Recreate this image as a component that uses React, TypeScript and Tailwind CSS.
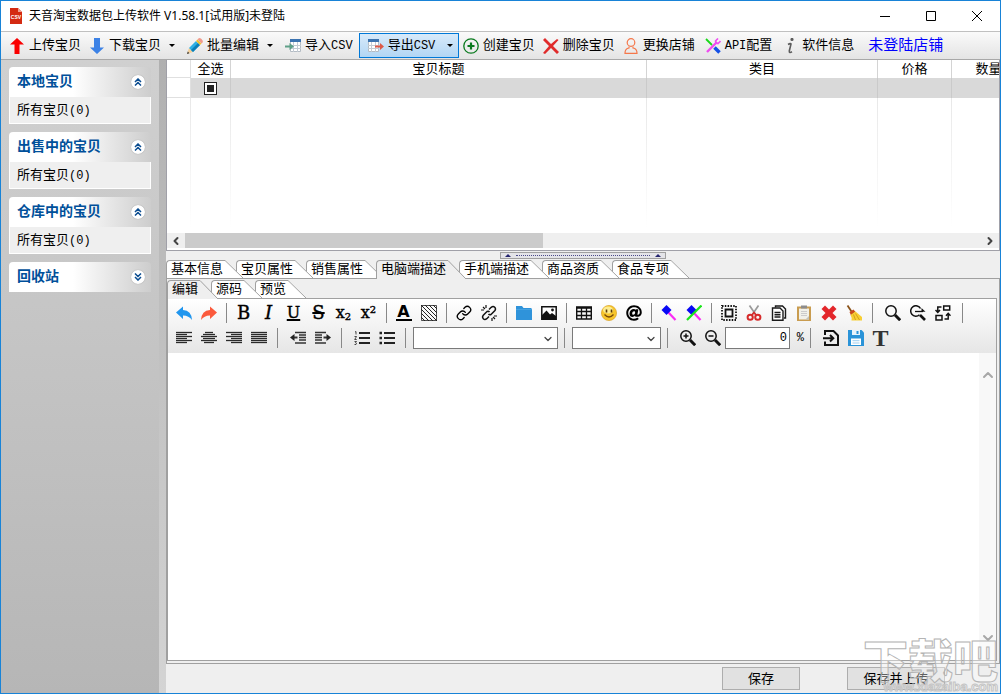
import type { ReactNode } from "react";
import { FaAt } from "react-icons/fa";
import { ChevronDown, ChevronLeft, ChevronRight, ChevronUp, Link } from "lucide-react";

const ICON = "size-4 shrink-0";

/* ---------- main toolbar icons ---------- */

function CsvFile() {
  return (
    <svg viewBox="0 0 14 16" className="h-4 w-3.5 shrink-0">
      <path d="M1 0h8l4 4v12H1z" fill="#d42a12" />
      <path d="M9 0l4 4H9z" fill="#f0a090" />
      <text x="7" y="11" textAnchor="middle" fontSize="5" fontWeight="700" fontFamily="Liberation Sans" fill="#fff">
        CSV
      </text>
    </svg>
  );
}

function ArrowUp() {
  return (
    <svg viewBox="0 0 16 16" className={ICON}>
      <path d="M8 0l7 6.500h-4.500V16h-5V6.500H1z" fill="#fa0000" />
    </svg>
  );
}

function ArrowDown() {
  return (
    <svg viewBox="0 0 16 16" className={ICON}>
      <path d="M8 16L1 9.500h4V0h6v9.500h4z" fill="#3c82e6" />
    </svg>
  );
}

function Pencil() {
  return (
    <svg viewBox="0 0 16 16" className={ICON}>
      <path d="M0 16l2-6 4 4z" fill="#f3cf9a" />
      <path d="M0 16l.8-2.400 1.600 1.600z" fill="#333" />
      <path d="M2 10l7-7 4 4-7 7z" fill="#2fb0e4" />
      <path d="M4 12l7-7 2 2-7 7z" fill="#0b7fb8" />
      <path d="M9 3l1.500-1.500 4 4L13 7z" fill="#f2c12e" />
      <path d="M10.500 1.500L12 0q3 0 4 4l-1.500 1.500z" fill="#f09a8c" />
    </svg>
  );
}

function Sheet({ x }: { x: number }) {
  return (
    <g transform={`translate(${x} 0)`}>
      <path d="M.5 2.500h10v11H.5z" fill="#fff" stroke="#b4bcc4" />
      <path d="M0 1h11v3H0z" fill="#3b73b0" />
      <path d="M3.500 4v10M7.500 4v10M0 7.500h11M0 10.500h11" stroke="#c3cbd3" />
    </g>
  );
}

function ImportCsv() {
  return (
    <svg viewBox="0 0 16 16" className={ICON}>
      <Sheet x={5} />
      <path d="M0 7.500h4.500V5L9 8.500 4.500 12V9.500H0z" fill="#5fa088" />
    </svg>
  );
}

function ExportCsv() {
  return (
    <svg viewBox="0 0 16 16" className={ICON}>
      <Sheet x={0} />
      <path d="M7 7.500h5V5l4 3.500-4 3.500V9.500H7z" fill="#dd5a48" />
    </svg>
  );
}

function PlusCircle() {
  return (
    <svg viewBox="0 0 16 16" className={ICON} fill="none" stroke="#0a7a1e">
      <circle cx="8" cy="8" r="7.200" strokeWidth="1.300" />
      <path d="M8 4.500v7M4.500 8h7" strokeWidth="2.200" />
    </svg>
  );
}

function RedCross() {
  return (
    <svg viewBox="0 0 16 16" className={ICON}>
      <path d="M2 0l6 6 6-5 1.500 1-5.500 6 6 6-2 2-6-6-6 6-2-1 6-7-6-6z" fill="#e02b2b" />
    </svg>
  );
}

function Person() {
  return (
    <svg viewBox="0 0 16 16" className={ICON} fill="none" stroke="#f5774a" strokeWidth="1.200">
      <circle cx="8" cy="4.500" r="3.800" />
      <path d="M6 8.500v1.500q-4 .5-4 5.300h12q0-4.800-4-5.300V8.500" />
    </svg>
  );
}

function Tools() {
  return (
    <svg viewBox="0 0 16 16" className={ICON} fill="none">
      <path d="M1 1l6 6" stroke="#18d818" strokeWidth="1.800" />
      <path d="M9.500 9.500l5 5" stroke="#1450e6" strokeWidth="3.600" />
      <path d="M2 14L12 4" stroke="#ee4cf0" strokeWidth="2.400" />
      <path d="M13 .5l-2.500 2.500.5 2 2 .5L15.500 3" stroke="#ee4cf0" strokeWidth="1.600" />
    </svg>
  );
}

function Info() {
  return (
    <svg viewBox="0 0 16 16" className={ICON} fill="none" stroke="#5c5c5c" strokeWidth="1.600">
      <circle cx="10" cy="1.500" r=".8" fill="#5c5c5c" />
      <path d="M6 6.500q2.800-1.500 3-.5L7.300 13q-.3 2.500 2.700.8" />
    </svg>
  );
}

function Caret() {
  return (
    <svg viewBox="0 0 6 3" className="h-[3px] w-1.5">
      <path d="M0 0h6L3 3z" fill="#000" />
    </svg>
  );
}

function ToolItem({ icon, children, className = "" }: { icon: ReactNode; children: ReactNode; className?: string }) {
  return (
    <button type="button" className={`flex h-full shrink-0 items-center gap-1 px-1 ${className}`}>
      {icon}
      <span className="whitespace-nowrap">{children}</span>
    </button>
  );
}

function DropCaret({ label, className = "-ml-1 w-[22px]" }: { label: string; className?: string }) {
  return (
    <button type="button" aria-label={label} className={`flex h-full shrink-0 items-center justify-center ${className}`}>
      <Caret />
    </button>
  );
}

/* ---------- sidebar ---------- */

function ChevronBadge({ open }: { open: boolean }) {
  return (
    <span className="grid size-3.5 place-items-center rounded-full bg-white shadow-[0_0_1px_#888]">
      <svg viewBox="0 0 8 8" className={open ? "size-2" : "size-2 rotate-180"} fill="none" stroke="#0a4c90" strokeWidth="1.500">
        <path d="M1 4l3-3 3 3M1 7.500l3-3 3 3" />
      </svg>
    </span>
  );
}

function SidePanel({ title, open = true }: { title: string; open?: boolean }) {
  return (
    <section>
      <button
        type="button"
        className="flex h-[30px] w-full items-center justify-between rounded-t-sm bg-linear-to-r from-white from-45% to-[#cdcdcd] pr-1.5 pl-2 text-sm font-bold text-[#00509a]"
      >
        {title}
        <ChevronBadge open={open} />
      </button>
      {open && (
        <a href="#all" className="flex h-[27px] items-center border border-t-0 border-white bg-[#efefef] px-[7px] pt-0.5">
          所有宝贝<span className="text-xs">(0)</span>
        </a>
      )}
    </section>
  );
}

/* ---------- tabs ---------- */

const Z = ["z-10", "z-9", "z-8", "z-7", "z-6", "z-5", "z-4"];

function TabStrip({ tabs, active, label }: { tabs: string[]; active: number; label: string }) {
  return (
    <div role="tablist" aria-label={label} className="isolate flex h-5 shrink-0 items-end border-b border-[#a0a0a0] bg-[#efefef]">
      {tabs.map((t, i) => {
        const on = i === active;
        return (
          <button
            key={t}
            type="button"
            role="tab"
            aria-selected={on}
            className={`relative -mr-[7px] flex shrink-0 ${on ? "z-20 -mb-px h-[19px]" : `h-[18px] ${Z[i]}`}`}
          >
            <span
              className={`flex h-full items-center rounded-tl-sm border-t border-l border-[#a0a0a0] pr-0.5 pl-1 ${on ? "bg-[#efefef]" : "bg-white"}`}
            >
              {t}
            </span>
            <svg viewBox="0 0 18 19" preserveAspectRatio="none" className="h-full w-[18px]">
              <path d="M0 0l18 19H0z" fill={on ? "#efefef" : "#fff"} />
              <path d="M0 .5L18 19" stroke="#a0a0a0" fill="none" />
            </svg>
          </button>
        );
      })}
    </div>
  );
}

/* ---------- editor toolbar ---------- */

function Tool({ label, children }: { label: string; children: ReactNode }) {
  return (
    <button type="button" aria-label={label} className="grid h-[25px] w-[25px] shrink-0 place-items-center">
      {children}
    </button>
  );
}

function Sep({ wide = false }: { wide?: boolean }) {
  return (
    <span className={`flex shrink-0 justify-center ${wide ? "w-3" : "w-2.5"}`}>
      <span className="h-5 w-px bg-[#888]" />
    </span>
  );
}

function Undo({ flip = false }: { flip?: boolean }) {
  return (
    <svg viewBox="0 0 16 16" className={flip ? "size-4 -scale-x-100" : "size-4"}>
      <path d="M7 1.500v3.500q8.500.5 9 10Q12.500 10.300 7 10.500V14L0 7.500z" fill={flip ? "#fb5a3c" : "#2196ee"} />
    </svg>
  );
}

function Lines({ rows }: { rows: [number, number][] }) {
  return (
    <svg viewBox="0 0 16 14" className="h-3.5 w-4" stroke="#2a2a2a" fill="none">
      {rows.map(([a, b], i) => (
        <path key={i} d={`M${a} ${i * 2 + 1.5}H${b}`} strokeWidth="1.300" />
      ))}
    </svg>
  );
}

function ListIcon({ numbered }: { numbered: boolean }) {
  return (
    <svg viewBox="0 0 16 14" className="h-3.5 w-4" stroke="#222" fill="none">
      <path d="M5 2h11M5 7h11M5 12h11" strokeWidth="2.200" />
      {numbered ? (
        <path d="M1 1l1-.5v3M.5 5.500h2L.7 8.500h2M.5 10.500h2l-1 1.200 1 .6-.5 1.200H.5" strokeWidth=".8" />
      ) : (
        <path d="M.5 2h2.500M.5 7h2.500M.5 12h2.500" strokeWidth="2.600" />
      )}
    </svg>
  );
}

function Hatch() {
  return (
    <svg viewBox="0 0 16 16" className="size-4" stroke="#222" fill="none">
      <path d="M.5.5h15v15H.5z" strokeWidth=".8" />
      <path d="M12 0l4 4M8 0l8 8M4 0l12 12M0 0l16 16M0 4l12 12M0 8l8 8M0 12l4 4" />
    </svg>
  );
}

function BrokenLink() {
  return (
    <svg viewBox="0 0 16 16" className="size-4" stroke="#111" fill="none" strokeWidth="1.500">
      <path d="M8 4.500l2.200-2.200q2-1.500 3.500 0t0 3.500L11.500 8 10 9.500q-1.500.8-2.500-.5" />
      <path d="M8 11.500l-2.200 2.200q-2 1.500-3.500 0t0-3.500L4.500 8 6 6.500q1.500-.8 2.500.5" />
      <path d="M5 0v3M2 2l2 2M0 5h3M11 16v-3M14 14l-2-2M16 11h-3" strokeWidth="1.200" />
    </svg>
  );
}

function Folder() {
  return (
    <svg viewBox="0 0 16 14" className="h-3.5 w-4">
      <path d="M0 0h6l1.500 2H15l1 1v11H0z" fill="#2f93da" />
      <path d="M0 3.500h16" stroke="#56aee8" strokeWidth=".6" />
    </svg>
  );
}

function Picture() {
  return (
    <svg viewBox="0 0 16 14" className="h-3.5 w-4">
      <path d="M.8.8h14.400v12.400H.8z" fill="#fff" stroke="#111" strokeWidth="1.500" />
      <path d="M1 13V9l4.500-4.500L9 8.500l2-1.500 4 3v3z" fill="#111" />
      <circle cx="11.500" cy="4" r="1.400" fill="#111" />
    </svg>
  );
}

function TableIcon() {
  return (
    <svg viewBox="0 0 16 14" className="h-3.5 w-4" stroke="#111" fill="none">
      <path d="M.7 1.500h14.600v11.500H.7z" strokeWidth="1.400" />
      <path d="M0 1.500h16" strokeWidth="2.400" />
      <path d="M0 5.500h16M0 9.500h16M5.500 1v12M10.500 1v12" strokeWidth="1.300" />
    </svg>
  );
}

function Smile() {
  return (
    <svg viewBox="0 0 16 16" className="size-4">
      <circle cx="8" cy="8" r="7.600" fill="#f6c52c" stroke="#d69a16" strokeWidth=".6" />
      <ellipse cx="7" cy="5" rx="5" ry="3.500" fill="#fdec90" />
      <path d="M5.500 4.500v3M10.500 4.500v3" stroke="#5a3a08" strokeWidth="1.600" />
      <path d="M3.500 9.500q4.500 5 9 0" stroke="#7a4a08" strokeWidth="1.300" fill="none" />
    </svg>
  );
}

function Brush({ off = false }: { off?: boolean }) {
  return (
    <svg viewBox="0 0 16 16" className="size-4" fill="none">
      <path d="M7 7l7.500 8" stroke="#fa2cf5" strokeWidth="2.200" />
      <path d="M5.500 0l5 5-5 5-5-5z" fill="#0808f4" />
      {off && <path d="M1 15L15.500.5" stroke="#1be61b" strokeWidth="2.200" />}
    </svg>
  );
}

function SelectAll() {
  return (
    <svg viewBox="0 0 16 16" className="size-4" fill="none" stroke="#111">
      <path d="M1 1h14v14H1z" strokeWidth="1.800" strokeDasharray="1.500 1.300" />
      <path d="M4.500 4.500h7v7h-7z" strokeWidth="1.800" />
    </svg>
  );
}

function Scissors() {
  return (
    <svg viewBox="0 0 16 16" className="size-4" fill="none">
      <path d="M3.500.5L10 10M12.500.5L6 10" stroke="#9a9a9a" strokeWidth="1.700" />
      <ellipse cx="4.200" cy="12.300" rx="2.600" ry="2.500" stroke="#d62a2a" strokeWidth="2" />
      <ellipse cx="11.800" cy="12.300" rx="2.600" ry="2.500" stroke="#d62a2a" strokeWidth="2" />
      <path d="M6 10l2-2.500 2 2.500" stroke="#d62a2a" strokeWidth="1.500" />
    </svg>
  );
}

function CopyIcon() {
  return (
    <svg viewBox="0 0 16 16" className="size-4" fill="none" stroke="#1a1a1a" strokeWidth="1.400">
      <path d="M4.500 2.500V1h7L14.500 4v9H13" />
      <path d="M1.500 3h7.500l3 3v9.300H1.500z" fill="#fff" />
      <path d="M3.500 7.500h6M3.500 9.800h6M3.500 12h6" />
    </svg>
  );
}

function PasteIcon() {
  return (
    <svg viewBox="0 0 16 16" className="size-4">
      <path d="M1 1.500h14V16H1z" fill="#c99c50" />
      <path d="M3 3.500h10v11H3z" fill="#f1f1ea" />
      <path d="M5 .5h6v3H5z" fill="#8c8c8c" />
      <path d="M5 6.500h6M5 8.500h6M5 10.500h6" stroke="#ccc" />
      <path d="M13 11v3.500H9.500z" fill="#c2c2ba" />
    </svg>
  );
}

function FatCross() {
  return (
    <svg viewBox="0 0 16 16" className="size-4">
      <path d="M4 .5L8 4.500l4-4L15.500 4 11.500 8l4 4-3.500 3.500-4-4-4 4L.5 12l4-4-4-4z" fill="#e3262b" />
    </svg>
  );
}

function Broom() {
  return (
    <svg viewBox="0 0 16 16" className="size-4">
      <path d="M1.500.5l4 6" stroke="#8a5218" strokeWidth="1.800" />
      <path d="M3.500 7l4-2.500L9.500 7 5 10.500z" fill="#c84a1c" />
      <path d="M4.500 10L9.500 6.500l6.500 5.500v3.500H5.500q.8-2.500-1-5.500z" fill="#f8cf34" />
      <path d="M7.500 9.500l2 5.500M9.500 8.500l4 6.500" stroke="#c28d12" strokeWidth=".7" />
    </svg>
  );
}

function Magnifier({ sign }: { sign?: string }) {
  return (
    <svg viewBox="0 0 16 16" className="size-4" fill="none" stroke="#111">
      <circle cx="6" cy="6" r="5.200" strokeWidth="1.500" />
      <path d="M10 10l5.200 5.200" strokeWidth="3" />
      {sign && <path d={sign} strokeWidth="1.500" />}
    </svg>
  );
}

function FindNext() {
  return (
    <svg viewBox="0 0 16 16" className="size-4" fill="none" stroke="#111">
      <path d="M9.500 9.700A5.200 5.200 0 1 1 10.500 3.500" strokeWidth="1.500" />
      <path d="M5 6.500h8" strokeWidth="1.300" />
      <path d="M11.500 3L15.500 6.700h-4z" fill="#111" stroke="none" />
      <path d="M10 10l5 5" strokeWidth="2.600" />
    </svg>
  );
}

function Replace() {
  return (
    <svg viewBox="0 0 16 16" className="size-4" fill="none" stroke="#111" strokeWidth="1.500">
      <path d="M8.700 1h6v4h-6zM1 10.500h6v4.500H1z" />
      <path d="M6.500 2H2.800v5M.5 5l2.300 2.500L5 5M9.500 14h3.700V9M11 10.800l2.200-2.500 2.300 2.500" />
    </svg>
  );
}

function Indent({ out = false }: { out?: boolean }) {
  return (
    <svg viewBox="0 0 16 14" className="h-3.5 w-4" stroke="#333" fill="none">
      {out ? (
        <>
          <path d="M5 1.500h11M9 4h7M9 6.500h7M9 9h7M5 12h11" strokeWidth="1.300" />
          <path d="M3 6.500h4.500" strokeWidth="2" />
          <path d="M4.500 3v7L0 6.500z" fill="#222" stroke="none" />
        </>
      ) : (
        <>
          <path d="M0 1.500h11M0 4h7M0 6.500h7M0 9h7M0 12h11" strokeWidth="1.300" />
          <path d="M8.500 6.500H13" strokeWidth="2" />
          <path d="M11.500 3v7L16 6.500z" fill="#222" stroke="none" />
        </>
      )}
    </svg>
  );
}

function InsertFile() {
  return (
    <svg viewBox="0 0 16 16" className="size-4" fill="none" stroke="#111" strokeWidth="2">
      <path d="M2 5V1h8.500L15 5.500V15H2v-3.500" />
      <path d="M0 8.200h9M7 5l3.300 3.200L7 11.500" />
    </svg>
  );
}

function Floppy() {
  return (
    <svg viewBox="0 0 16 16" className="size-4">
      <path d="M0 0h13.500L16 2.500V16H0z" fill="#2a93d8" />
      <path d="M4 0h8v5H4z" fill="#e8f3fb" />
      <path d="M8.500 1h2v3h-2z" fill="#2a93d8" />
      <path d="M3 8.500h10V15H3z" fill="#fff" />
      <path d="M4.500 10.700h7M4.500 13h7" stroke="#9ccdf0" />
    </svg>
  );
}

function Select({ label, width }: { label: string; width: string }) {
  return (
    <span className={`relative shrink-0 ${width}`}>
      <select aria-label={label} className="h-[22px] w-full appearance-none border border-[#7a7a7a] bg-white px-1">
        <option value="" />
      </select>
      <ChevronDown className="pointer-events-none absolute top-1.5 right-1 size-3 text-[#444]" strokeWidth={2.5} />
    </span>
  );
}

const GLYPH = "font-['DejaVu_Serif'] leading-none [-webkit-text-stroke:0.4px_#000]";

function EditorToolbar() {
  const full: [number, number] = [0, 16];
  return (
    <div className="shrink-0 overflow-hidden bg-linear-to-b from-white to-[#e6e6e6] pt-px pb-[3px] pl-[3px] text-black">
      <div className="flex items-center">
        <Tool label="撤销"><Undo /></Tool>
        <Tool label="重做"><Undo flip /></Tool>
        <Sep />
        <Tool label="粗体"><span className={`${GLYPH} text-lg`}>B</span></Tool>
        <Tool label="斜体"><span className={`${GLYPH} text-lg italic`}>I</span></Tool>
        <Tool label="下划线"><span className={`${GLYPH} text-base underline decoration-2`}>U</span></Tool>
        <Tool label="删除线"><span className={`${GLYPH} text-lg line-through decoration-2`}>S</span></Tool>
        <Tool label="下标"><span className={`${GLYPH} text-base`}>x<sub className="text-[10px]">2</sub></span></Tool>
        <Tool label="上标"><span className={`${GLYPH} text-base`}>x<sup className="text-[10px]">2</sup></span></Tool>
        <Sep />
        <Tool label="文字颜色">
          <span className="w-4 border-b-2 border-black text-center font-['DejaVu_Sans'] text-base leading-3.5 font-bold">A</span>
        </Tool>
        <Tool label="背景色"><Hatch /></Tool>
        <Sep />
        <Tool label="链接"><Link className="size-4" strokeWidth={2} /></Tool>
        <Tool label="取消链接"><BrokenLink /></Tool>
        <Sep />
        <Tool label="文件夹"><Folder /></Tool>
        <Tool label="图片"><Picture /></Tool>
        <Sep />
        <Tool label="表格"><TableIcon /></Tool>
        <Tool label="表情"><Smile /></Tool>
        <Tool label="锚点"><FaAt className="size-4" /></Tool>
        <Sep />
        <Tool label="格式刷"><Brush /></Tool>
        <Tool label="取消格式刷"><Brush off /></Tool>
        <Sep />
        <Tool label="选择"><SelectAll /></Tool>
        <Tool label="剪切"><Scissors /></Tool>
        <Tool label="复制"><CopyIcon /></Tool>
        <Tool label="粘贴"><PasteIcon /></Tool>
        <Tool label="删除"><FatCross /></Tool>
        <Tool label="清除格式"><Broom /></Tool>
        <Sep wide />
        <div className="flex px-0.5">
          <Tool label="查找"><Magnifier /></Tool>
          <Tool label="查找下一个"><FindNext /></Tool>
          <Tool label="替换"><Replace /></Tool>
        </div>
        <Sep />
      </div>
      <div className="flex items-center">
        <Tool label="左对齐"><Lines rows={[full, [0, 11], full, [0, 11], full, [0, 11]]} /></Tool>
        <Tool label="居中"><Lines rows={[[4, 12], [2, 14], full, [2, 14], full, [3, 13]]} /></Tool>
        <Tool label="右对齐"><Lines rows={[full, [5, 16], full, [5, 16], full, [5, 16]]} /></Tool>
        <Tool label="两端对齐"><Lines rows={[full, full, full, full, full, full]} /></Tool>
        <Sep wide />
        <div className="flex pl-0.5">
          <Tool label="减少缩进"><Indent out /></Tool>
          <Tool label="增加缩进"><Indent /></Tool>
        </div>
        <Sep wide />
        <div className="flex pl-0.5">
          <Tool label="编号列表"><ListIcon numbered /></Tool>
          <Tool label="项目列表"><ListIcon numbered={false} /></Tool>
        </div>
        <Sep wide />
        <div className="flex pl-0.5"><Select label="字体" width="w-[145px]" /></div>
        <Sep wide />
        <div className="flex pl-0.5"><Select label="字号" width="w-[89px]" /></div>
        <Sep wide />
        <div className="flex items-center pl-0.5">
          <Tool label="放大"><Magnifier sign="M3.500 6h5M6 3.500v5" /></Tool>
          <Tool label="缩小"><Magnifier sign="M3.500 6h5" /></Tool>
          <input aria-label="缩放比例" defaultValue="0" className="h-[22px] w-[65px] border border-[#7a7a7a] bg-white px-0.5 text-right text-xs" />
          <span className="w-3.5 text-right text-xs">%</span>
        </div>
        <Sep wide />
        <div className="flex pl-0.5">
          <Tool label="导入"><InsertFile /></Tool>
          <Tool label="保存文件"><Floppy /></Tool>
          <Tool label="文本"><span className="font-['Liberation_Serif'] text-2xl leading-none font-bold text-[#333]">T</span></Tool>
        </div>
      </div>
    </div>
  );
}

/* ---------- item grid ---------- */

const COLS = ["全选", "宝贝标题", "类目", "价格", "数量"];

function ItemGrid() {
  return (
    <div className="shrink-0 border-r border-b border-l border-[#a0a0a8] bg-white">
      <div className="h-[173px] overflow-hidden">
        <table className="w-[859px] min-w-full table-fixed border-separate border-spacing-0">
          <colgroup>
            <col className="w-6" />
            <col className="w-10" />
            <col />
            <col className="w-[231px]" />
            <col className="w-[74px]" />
            <col className="w-[74px]" />
          </colgroup>
          <thead>
            <tr className="h-[18px] leading-[17px]">
              <th aria-label="行" className="border-r border-b border-[#e0e0e0] p-0" />
              {COLS.map((c) => (
                <th key={c} className="border-r border-[#d4d4d4] p-0 font-normal">{c}</th>
              ))}
            </tr>
          </thead>
          <tbody>
            <tr className="h-5 bg-[#d9d9d9]">
              <td className="border-r border-b border-[#e0e0e0] bg-white p-0" />
              <td className="border-r border-[#cacaca] p-0">
                <label className="relative mx-auto grid size-[13px] place-items-center border border-[#222] bg-white">
                  <input type="checkbox" aria-label="选择" className="absolute inset-0 appearance-none" />
                  <span className="size-[7px] bg-[#222]" />
                </label>
              </td>
              {COLS.slice(1).map((c) => (
                <td key={c} className="border-r border-[#cacaca] p-0" />
              ))}
            </tr>
            <tr>
              {["行", ...COLS].map((c) => (
                <td key={c} className="p-0">
                  <div className="ml-auto h-[130px] w-px bg-linear-to-b from-[#e8e8e8] to-white" />
                </td>
              ))}
            </tr>
          </tbody>
        </table>
      </div>
      <div className="mb-0.5 flex h-[15px] items-center bg-[#efefef]">
        <button type="button" aria-label="向左滚动" className="grid w-[18px] shrink-0 place-items-center text-[#444]">
          <ChevronLeft className="size-3" strokeWidth={4} />
        </button>
        <div className="h-full flex-1"><div className="h-full w-[45%] bg-[#cbcbcb]" /></div>
        <button type="button" aria-label="向右滚动" className="grid w-[18px] shrink-0 place-items-center text-[#444]">
          <ChevronRight className="size-3" strokeWidth={4} />
        </button>
      </div>
    </div>
  );
}

function Splitter() {
  return (
    <div className="flex h-2 shrink-0 items-end justify-center bg-[#efefef]">
      <div className="flex h-[7px] w-[166px] items-center justify-between border border-[#a0a0a0] bg-[#e4e4e8] px-1">
        <svg viewBox="0 0 6 3" className="h-[3px] w-1.5"><path d="M3 0l3 3H0z" fill="#24246e" /></svg>
        <span className="w-[134px] border-b border-dotted border-[#4a4a8a]" />
        <svg viewBox="0 0 6 3" className="h-[3px] w-1.5"><path d="M3 0l3 3H0z" fill="#24246e" /></svg>
      </div>
    </div>
  );
}

function Watermark() {
  return (
    <div className="pointer-events-none absolute right-0.5 bottom-0 z-30 flex flex-col items-end text-white/40">
      <span className="font-['Noto_Sans_CJK_SC'] text-[45px] leading-[44px] font-black [-webkit-text-stroke:1px_#b4b4b4]">下载吧</span>
      <span className="font-['Liberation_Sans'] text-[13px] leading-3 font-bold [-webkit-text-stroke:1px_#c4c4c4]">www.xiazaiba.com</span>
    </div>
  );
}

export default function App() {
  return (
    <div className="relative flex h-screen flex-col overflow-hidden border border-[#1883d7] bg-[#efefef] font-['Liberation_Mono','Noto_Sans_CJK_SC',monospace] text-[13px] leading-4 text-black">
      <header className="flex h-[30px] shrink-0 items-center bg-white pl-2">
        <CsvFile />
        <h1 className="ml-1.5 font-['Noto_Sans','Noto_Sans_CJK_SC',sans-serif] text-xs">天音淘宝数据包上传软件 V1.58.1[试用版]未登陆</h1>
        <div className="ml-auto flex h-full">
          <button type="button" aria-label="最小化" className="grid w-[46px] place-items-center">
            <svg viewBox="0 0 10 10" className="size-2.5" stroke="#000"><path d="M0 5.500h10" /></svg>
          </button>
          <button type="button" aria-label="最大化" className="grid w-[46px] place-items-center">
            <svg viewBox="0 0 10 10" className="size-2.5" stroke="#000" fill="none"><path d="M.5.5h9v9h-9z" /></svg>
          </button>
          <button type="button" aria-label="关闭" className="grid w-[46px] place-items-center">
            <svg viewBox="0 0 10 10" className="size-2.5" stroke="#000"><path d="M0 0l10 10M10 0L0 10" /></svg>
          </button>
        </div>
      </header>

      <nav className="flex h-[29px] shrink-0 items-center border-t border-b border-t-[#c0c0c0] border-b-[#a8a8a8] bg-linear-to-b from-[#fafafa] to-[#e4e4e4] pl-1">
        <ToolItem icon={<ArrowUp />}>上传宝贝</ToolItem>
        <ToolItem icon={<ArrowDown />}>下载宝贝</ToolItem>
        <DropCaret label="下载选项" />
        <ToolItem icon={<Pencil />}>批量编辑</ToolItem>
        <DropCaret label="编辑选项" />
        <ToolItem icon={<ImportCsv />}>导入<span className="text-xs">CSV</span></ToolItem>
        <div className="ml-0.5 flex h-[25px] w-[100px] shrink-0 items-center justify-between border border-[#0078d7] bg-linear-to-b from-[#d8eafa] to-[#b2d6f4] pl-1">
          <ToolItem icon={<ExportCsv />}>导出<span className="text-xs">CSV</span></ToolItem>
          <DropCaret label="导出选项" className="w-4" />
        </div>
        <ToolItem icon={<PlusCircle />}>创建宝贝</ToolItem>
        <ToolItem icon={<RedCross />}>删除宝贝</ToolItem>
        <ToolItem icon={<Person />}>更换店铺</ToolItem>
        <ToolItem icon={<Tools />} className="ml-0.5"><span className="text-xs">API</span>配置</ToolItem>
        <ToolItem icon={<Info />} className="ml-0.5">软件信息</ToolItem>
        <a href="#shop" className="ml-2.5 shrink-0 pt-0.5 text-[15px] text-[#0000ff]">未登陆店铺</a>
      </nav>

      <div className="flex min-h-0 flex-1">
        <aside className="flex w-[158px] shrink-0 flex-col gap-2 bg-linear-to-b from-[#d0d0d0] to-[#b6b6b6] p-2 pt-[7px]">
          <SidePanel title="本地宝贝" />
          <SidePanel title="出售中的宝贝" />
          <SidePanel title="仓库中的宝贝" />
          <SidePanel title="回收站" open={false} />
        </aside>
        <div className="w-[7px] shrink-0 bg-linear-to-b from-[#b0b0b0] to-[#d4d4d4]" />

        <main className="flex min-w-0 flex-1 flex-col">
          <ItemGrid />
          <Splitter />
          <TabStrip
            label="宝贝信息"
            tabs={["基本信息", "宝贝属性", "销售属性", "电脑端描述", "手机端描述", "商品资质", "食品专项"]}
            active={3}
          />
          <div className="flex min-h-0 flex-1 flex-col border-r border-b border-l border-[#a0a0a0] pr-0.5 pb-0.5">
            <TabStrip label="编辑模式" tabs={["编辑", "源码", "预览"]} active={0} />
            <div className="flex min-h-0 flex-1 flex-col border-r border-b border-l border-[#a0a0a0] bg-white">
              <EditorToolbar />
              <div className="flex min-h-0 flex-1">
                <textarea aria-label="描述内容" className="min-w-0 flex-1 resize-none bg-white p-2 outline-none" />
                <div className="flex w-[17px] shrink-0 flex-col items-center justify-between bg-[#f8f8f8] py-3.5 text-[#a8a8a8]">
                  <ChevronUp className="size-4" strokeWidth={3} />
                  <ChevronDown className="size-4" strokeWidth={3} />
                </div>
              </div>
            </div>
          </div>
          <footer className="flex h-[29px] shrink-0 items-center justify-end gap-[47px] pr-[55px]">
            <button type="button" className="h-[23px] w-[78px] border border-[#adadad] bg-[#e1e1e1] pt-0.5">保存</button>
            <button type="button" className="h-[23px] w-[98px] border border-[#adadad] bg-[#e1e1e1] pt-0.5">保存并上传</button>
          </footer>
        </main>
      </div>
      <Watermark />
    </div>
  );
}
